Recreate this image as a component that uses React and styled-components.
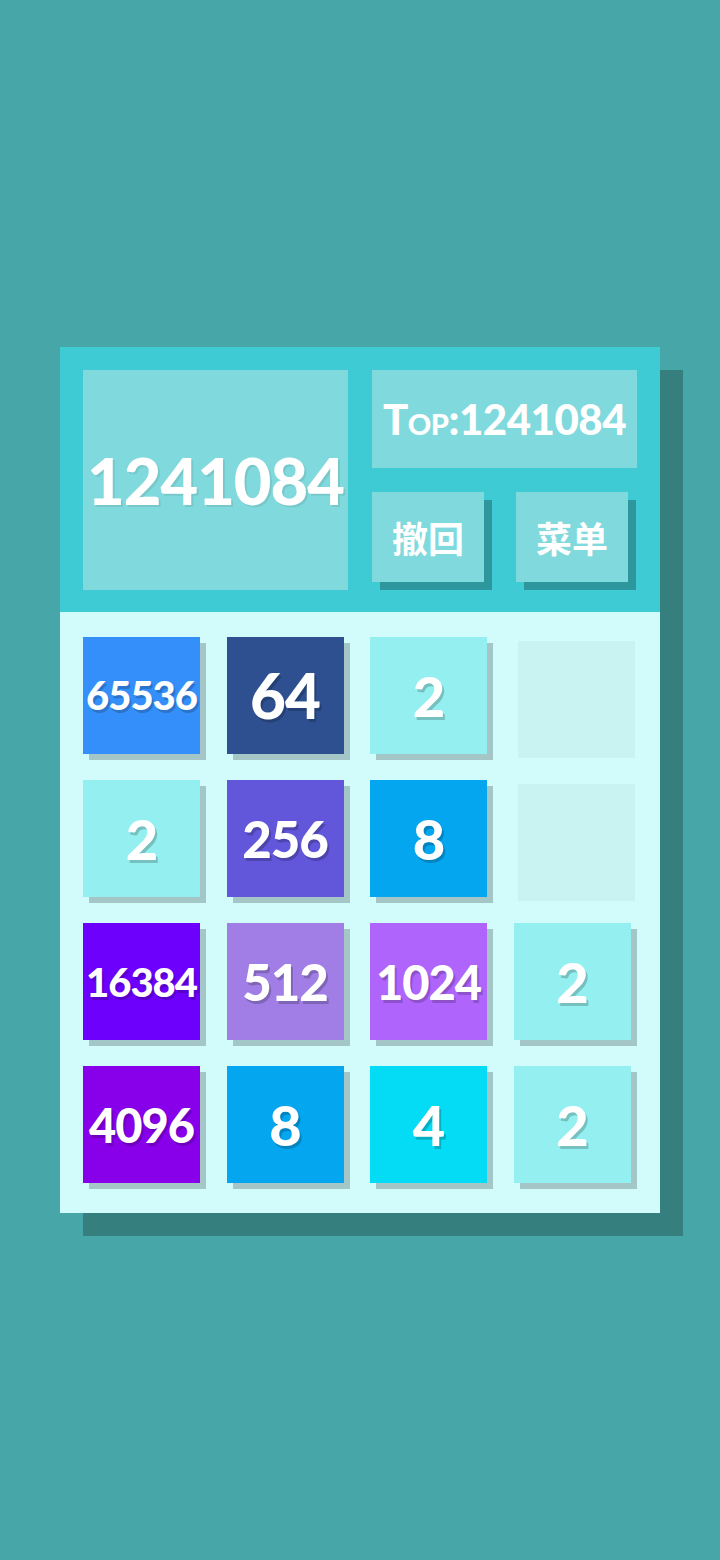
import React from 'react';
import styled, { createGlobalStyle } from 'styled-components';

const GlobalStyle = createGlobalStyle`
  html, body {
    margin: 0;
    padding: 0;
    background: #46a6a8;
  }
  * { box-sizing: border-box; }
`;

const Page = styled.div`
  width: 720px;
  min-height: 1560px;
  display: flex;
  align-items: center;
  justify-content: center;
  font-family: Lato, "Noto Sans", sans-serif;
`;

const Panel = styled.div`
  width: 600px;
  background: #d2fcfc;
  box-shadow: 23px 23px 0 #357f7f;
`;

const Header = styled.div`
  display: flex;
  gap: 24px;
  padding: 23px 23px 22px;
  background: #3ecbd3;
`;

const ScoreBox = styled.div`
  width: 265px;
  height: 220px;
  background: #80d9dc;
  display: flex;
  align-items: center;
  justify-content: center;
  color: #fff;
  font-weight: 900;
  font-size: 65px;
  letter-spacing: -1px;
  text-shadow: 2px 2px 0 rgba(0, 0, 0, 0.08);
`;

const RightCol = styled.div`
  width: 265px;
  display: flex;
  flex-direction: column;
  gap: 24px;
`;

const TopBox = styled.div`
  height: 98px;
  background: #80d9dc;
  display: flex;
  align-items: center;
  justify-content: center;
  color: #fff;
  font-weight: 900;
  font-size: 42px;
  letter-spacing: -0.5px;
  font-variant: small-caps;
`;

const ButtonRow = styled.div`
  display: flex;
  gap: 32px;
`;

const Button = styled.button`
  width: 112px;
  height: 90px;
  border: none;
  padding: 0;
  background: #80d9dc;
  box-shadow: 8px 8px 0 #2e979d;
  color: #fff;
  font-family: "Noto Sans CJK SC", "Noto Sans", sans-serif;
  font-weight: 700;
  font-size: 36px;
  cursor: pointer;
`;

const Board = styled.div`
  display: grid;
  grid-template-columns: repeat(4, 117px);
  grid-auto-rows: 117px;
  column-gap: 26.5px;
  row-gap: 26.3px;
  padding: 25px 23px 30px;
`;

const Tile = styled.div`
  display: flex;
  align-items: center;
  justify-content: center;
  background: ${p => p.$bg};
  box-shadow: 6px 6px 0 #a5c6c6;
  color: #fff;
  font-weight: 900;
  font-size: ${p => p.$size}px;
  letter-spacing: -1px;
  text-shadow: 2px 3px 0 rgba(0, 0, 0, 0.2);
`;

const EmptyCell = styled.div`
  background: #c9f3f3;
  transform: translate(4px, 4px);
`;

const colors = {
  2: '#94f0f0',
  4: '#04dbf4',
  8: '#04a6f0',
  64: '#2e5091',
  256: '#6256da',
  512: '#a07ee6',
  1024: '#af64fb',
  4096: '#8800ea',
  16384: '#6d00fc',
  65536: '#348ffa',
};

const sizeFor = v => {
  const len = String(v).length;
  if (len === 1) return 56;
  if (len === 2) return 62;
  if (len === 3) return 51;
  if (len === 4) return 47;
  return 40;
};

const grid = [
  [65536, 64, 2, 0],
  [2, 256, 8, 0],
  [16384, 512, 1024, 2],
  [4096, 8, 4, 2],
];

export default function App() {
  return (
    <Page>
      <GlobalStyle />
      <Panel>
        <Header>
          <ScoreBox>1241084</ScoreBox>
          <RightCol>
            <TopBox>Top:1241084</TopBox>
            <ButtonRow>
              <Button>撤回</Button>
              <Button>菜单</Button>
            </ButtonRow>
          </RightCol>
        </Header>
        <Board>
          {grid.flat().map((v, i) =>
            v ? (
              <Tile key={i} $bg={colors[v]} $size={sizeFor(v)}>
                {v}
              </Tile>
            ) : (
              <EmptyCell key={i} />
            )
          )}
        </Board>
      </Panel>
    </Page>
  );
}
